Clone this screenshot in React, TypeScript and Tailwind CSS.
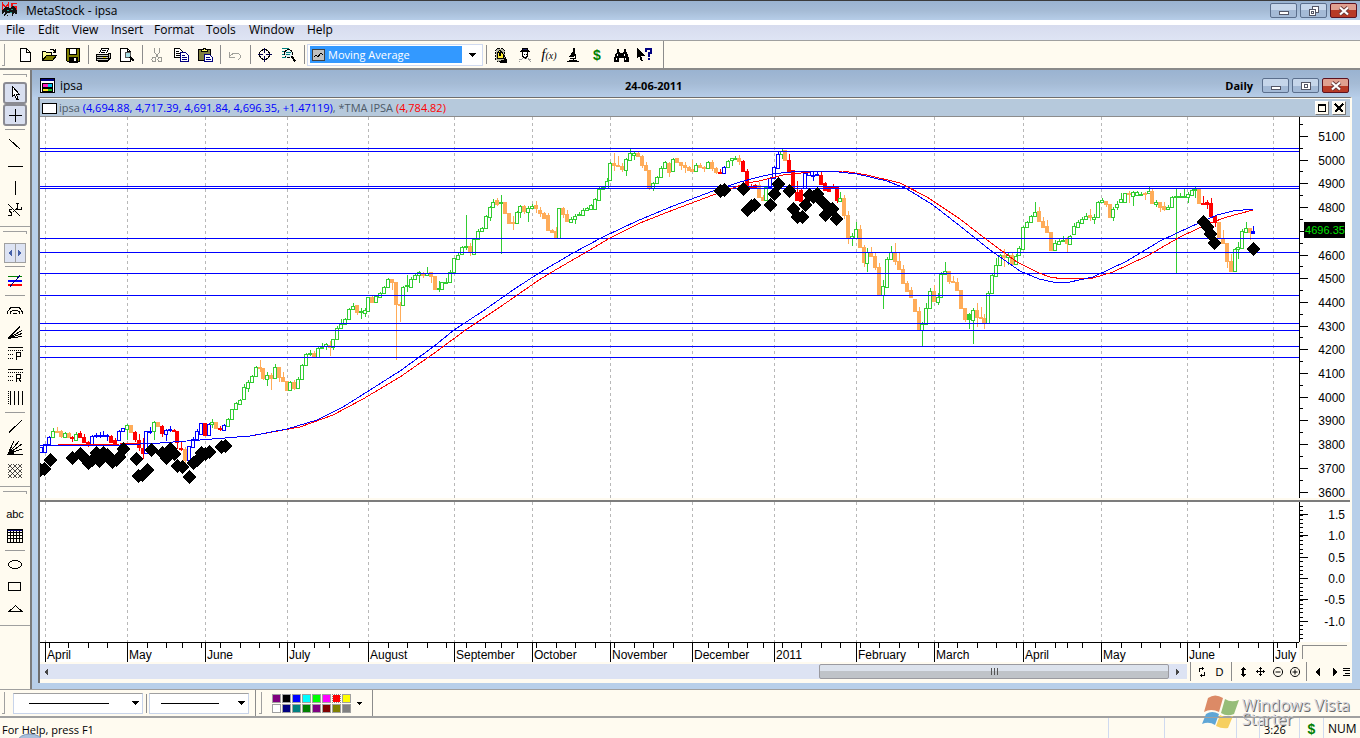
import type { ReactNode } from "react";

type Tone = "g" | "o" | "r" | "b";

const toneColor = { g: "#32cd32", o: "#ffac59", r: "#ff0000", b: "#0000ff" };

// x, tone, high, body top, body bottom, low
const candleData = `
41 b 447 447 452 452|45 b 444 444 452 452|49 b 436 437 444 444|53 g 428 431 437 437|57 o 427 431 432 432|61 o 430 431 436 437|65 g 432 433 437 437|69 o 432 433 437 437
72 r 436 437 438 441|76 g 432 434 440 440|80 r 431 433 437 437|84 r 434 437 442 442|88 r 441 442 443 446|92 b 435 436 444 444|96 b 433 435 436 437|100 b 432 435 436 437
103 b 431 435 436 436|107 b 434 435 436 440|111 r 435 436 442 442|115 r 438 440 443 445|119 b 430 431 440 440|123 b 428 428 431 431|127 g 424 425 429 439|131 o 425 425 432 432
135 r 431 432 439 441|139 r 434 440 447 450|143 r 438 448 453 458|146 b 431 431 453 453|150 b 427 431 432 433|154 g 421 422 431 439|158 o 422 422 426 426|162 r 425 426 433 436
166 b 429 430 434 440|170 b 426 429 430 431|174 r 429 430 431 431|177 r 431 431 442 448|181 r 441 448 449 450|185 o 447 449 460 463|189 b 446 446 460 460|193 b 437 439 447 447
197 b 429 431 439 439|201 b 423 423 434 434|205 r 423 423 435 435|209 b 423 424 435 435|212 g 419 422 424 427|216 o 422 422 428 428|220 r 426 428 429 430|224 b 424 425 430 430
228 g 418 419 426 426|232 g 409 409 419 419|236 g 402 403 409 409|240 g 399 400 404 404|244 g 384 387 399 399|248 g 380 382 388 391|252 g 375 376 382 382|256 g 366 367 376 376
260 o 360 367 368 371|263 o 368 368 378 379|267 g 372 375 379 385|271 o 373 375 378 389|275 g 364 367 378 378|279 o 367 367 377 381|283 o 372 377 381 381|287 o 381 381 390 390
290 g 381 382 390 390|294 o 380 382 388 389|298 g 377 379 388 388|302 g 364 365 379 379|306 g 353 354 365 365|310 g 350 353 354 355|314 o 351 353 356 357|318 g 347 348 357 357
322 g 343 347 348 348|326 g 343 344 346 349|330 o 341 345 347 355|333 g 339 339 347 349|337 g 326 328 339 339|341 g 319 324 328 328|345 g 318 319 324 324|349 g 308 309 319 319
353 g 303 306 309 309|357 o 305 305 312 314|361 g 308 311 312 318|365 g 308 310 313 316|368 g 297 297 311 311|372 o 296 297 302 302|376 g 296 296 302 302|380 g 292 293 297 297
384 g 286 287 293 293|388 g 278 279 287 287|392 o 279 279 282 289|396 o 282 282 304 359|400 o 302 304 305 321|403 g 286 287 305 305|407 g 275 285 286 291|411 g 277 279 287 287
415 g 273 275 279 279|419 g 271 272 275 282|423 o 272 273 275 277|427 g 267 273 275 275|431 o 272 272 276 282|435 o 276 276 289 289|439 g 281 288 289 291|442 g 282 282 289 289
446 g 278 282 283 283|450 g 270 272 282 282|454 g 258 258 272 272|458 g 253 255 259 259|462 g 246 247 254 254|466 g 215 246 247 249|470 o 243 246 252 255|474 g 239 239 254 254
478 g 229 231 239 239|482 g 227 228 231 231|486 g 215 216 228 228|490 g 206 207 217 220|493 g 199 202 207 207|497 o 198 200 204 205|501 g 195 202 203 253|505 o 202 202 213 213
509 o 213 213 223 223|513 o 216 222 223 229|517 g 211 212 223 223|520 g 205 206 212 217|524 o 205 206 211 213|528 g 206 208 212 221|532 g 204 206 208 208|536 o 201 205 208 212
540 o 207 210 213 216|544 o 212 213 218 218|548 o 213 215 230 230|552 o 229 230 232 232|556 o 227 231 237 237|559 g 208 208 238 238|563 o 207 208 214 217|567 o 210 214 221 221
571 g 217 219 222 222|575 g 214 216 219 223|579 g 212 214 215 215|583 g 208 210 215 215|587 g 207 208 210 210|591 g 204 205 209 209|595 g 198 199 209 209|599 g 187 189 200 200
603 g 186 187 189 189|607 g 178 181 188 188|610 g 162 163 180 180|614 o 153 163 165 170|618 o 156 165 166 166|622 o 163 166 169 171|626 g 158 159 170 175|630 g 149 153 160 160
634 g 152 153 155 159|638 o 152 153 156 156|642 o 155 156 165 167|646 o 162 165 170 170|649 o 170 170 187 189|653 g 182 183 188 190|657 g 176 177 183 183|661 g 166 168 177 177
665 g 161 162 168 168|669 o 162 163 172 176|673 g 158 159 171 171|677 o 158 158 162 162|681 o 162 162 165 169|685 o 162 165 167 172|689 o 166 167 170 170|692 o 160 169 171 171
696 g 163 165 171 171|700 o 163 165 167 167|704 o 166 167 168 171|708 g 161 162 168 168|712 o 160 162 168 170|716 o 167 168 172 173|720 r 169 172 173 173|724 b 166 167 173 173
728 g 160 161 167 167|732 g 158 158 160 165|735 g 156 158 159 159|739 o 155 158 161 164|743 r 160 161 171 171|747 r 169 171 186 186|751 r 184 186 188 188|755 r 184 185 187 187
759 o 182 185 197 197|763 o 195 197 200 200|766 g 186 187 200 200|770 b 177 178 187 187|774 b 166 167 178 178|778 b 152 154 168 168|782 g 149 151 154 158|785 o 150 150 160 160
789 r 154 160 171 171|793 r 170 170 190 190|797 r 181 192 200 200|801 r 188 190 201 201|805 b 172 173 188 188|809 b 171 172 175 175|813 b 172 175 176 180|817 b 172 174 175 175
821 r 171 175 184 184|825 r 182 183 190 190|829 r 186 187 191 191|833 r 184 187 188 188|837 r 187 187 200 202|840 g 192 198 201 201|844 o 195 198 215 218|848 o 211 215 237 243
852 g 233 236 238 245|856 g 222 229 238 238|860 o 225 229 247 247|864 o 245 247 262 266|867 g 248 252 263 271|871 o 247 252 256 256|875 o 253 256 267 269|879 o 263 267 294 294
883 g 280 286 295 308|887 g 257 259 287 287|891 g 246 252 259 259|895 o 243 252 261 264|899 o 253 261 269 269|903 o 265 269 283 283|907 o 281 283 291 291|911 o 287 290 297 297
915 o 299 299 311 311|919 o 307 311 329 329|922 g 322 324 330 345|926 g 303 308 324 324|930 g 288 291 308 308|934 o 285 291 301 301|938 g 293 297 302 304|941 g 272 274 297 297
945 g 262 271 274 274|949 o 271 271 281 283|953 o 276 281 282 282|957 o 278 282 290 290|961 o 290 290 308 308|965 o 308 308 319 321|969 g 313 314 319 328|973 g 308 310 320 343
977 o 303 310 317 326|981 o 307 317 318 318|984 o 314 318 322 328|988 g 291 293 323 323|992 g 273 275 293 293|996 g 258 265 276 276|1000 g 254 255 265 265|1004 o 249 255 257 266
1008 g 253 255 257 264|1012 o 253 255 264 264|1016 g 254 256 264 264|1019 g 246 248 255 255|1023 g 226 227 249 249|1027 g 221 222 227 227|1031 g 215 216 222 222|1035 g 202 212 216 216
1039 o 207 211 221 221|1043 o 217 221 227 227|1047 o 220 226 232 232|1051 o 232 232 250 250|1055 g 240 243 250 250|1059 g 239 241 244 244|1063 g 236 240 241 241|1067 o 237 239 243 252
1070 g 235 236 244 244|1074 g 223 226 234 234|1078 g 220 222 227 227|1082 g 217 219 223 223|1086 g 213 216 219 219|1090 o 209 215 217 220|1094 g 214 217 219 223|1098 g 201 202 217 217
1102 g 198 200 202 202|1106 o 201 201 204 206|1110 o 204 204 217 217|1113 g 207 209 217 220|1117 g 201 204 207 209|1121 g 193 199 202 202|1125 g 193 193 202 202|1129 o 191 193 194 202
1133 g 191 192 196 205|1137 g 191 192 195 195|1141 g 192 194 195 195|1145 o 192 193 194 199|1149 g 187 191 193 193|1152 o 188 191 203 203|1156 g 200 202 204 206|1160 o 202 202 207 211
1164 o 202 206 209 210|1168 g 205 207 209 209|1172 g 196 197 207 207|1176 g 189 196 197 273|1180 g 193 196 197 197|1184 g 189 196 197 197|1188 g 192 194 197 202|1192 g 189 190 195 195
1195 g 187 189 190 197|1199 o 189 189 203 203|1203 r 196 203 204 204|1207 r 200 202 204 208|1211 r 198 203 216 216|1215 r 216 216 222 226|1219 o 222 222 238 238|1223 o 230 238 243 243
1227 o 243 243 261 267|1231 o 254 261 271 271|1235 g 248 249 271 271|1238 g 242 247 249 258|1242 g 229 231 248 248|1246 g 222 228 232 232|1250 o 228 228 232 239|1253 b 226 231 233 233`;

const candles = candleData
  .trim()
  .split(/[|\n]/)
  .map((row) => {
    const [x, tone, ...rest] = row.split(" ");
    const [high, top, bottom, low] = rest.map(Number);
    return { x: Number(x), tone: tone as Tone, high, top, bottom, low };
  });

const signals = [
  [40, 470], [44, 469], [50, 460], [72, 458], [80, 454], [84, 458], [88, 463], [92, 460], [96, 453], [99, 461],
  [103, 453], [107, 455], [112, 462], [116, 460], [119, 457], [123, 449], [136, 459], [138, 476], [142, 475],
  [147, 470], [151, 450], [162, 453], [166, 458], [170, 449], [174, 454], [177, 466], [182, 467], [189, 477],
  [193, 463], [197, 460], [201, 453], [205, 454], [209, 452], [221, 447], [225, 446], [720, 191], [724, 190],
  [743, 189], [747, 210], [751, 206], [754, 205], [770, 205], [774, 194], [778, 184], [789, 191], [793, 209],
  [797, 217], [802, 217], [805, 205], [809, 195], [813, 197], [817, 194], [821, 201], [825, 215], [828, 208],
  [832, 209], [836, 219], [1203, 222], [1207, 227], [1210, 234], [1214, 243], [1253, 249],
];

const fastAverage =
  "40,445 120,445 160,443 200,440 250,436 287,429 317,420 343,407 370,390 400,371 433,347 454,330 483,311 513,290 539,273 573,253 603,237 637,221 673,206 713,191 740,182 759,177 772,174 800,171 830,171 857,174 887,181 907,189 933,205 960,226 990,250 1020,271 1039,279 1053,282 1070,282 1093,277 1127,261 1160,241 1190,227 1217,215 1233,211 1253,209";
const slowAverage =
  "40,446 58,445 120,444 160,443 200,440 250,436 300,427 333,415 363,399 400,377 433,354 467,329 500,307 539,280 557,269 583,254 610,238 640,223 673,210 713,195 747,183 759,181 783,175 810,172 843,171 867,175 900,183 927,197 960,219 987,240 1017,262 1039,273 1050,277 1063,279 1093,278 1113,272 1147,256 1180,237 1210,223 1227,217 1253,210";

const levels = [148, 151, 186, 188, 238, 252, 273, 295, 323, 330, 346, 357];

const months = [
  { x: 45, label: "April" },
  { x: 127, label: "May" },
  { x: 205, label: "June" },
  { x: 287, label: "July" },
  { x: 368, label: "August" },
  { x: 454, label: "September" },
  { x: 532, label: "October" },
  { x: 610, label: "November" },
  { x: 692, label: "December" },
  { x: 774, label: "2011" },
  { x: 856, label: "February" },
  { x: 934, label: "March" },
  { x: 1023, label: "April" },
  { x: 1101, label: "May" },
  { x: 1187, label: "June" },
  { x: 1273, label: "July" },
];

const weekTicks = [
  49, 68, 88, 107, 147, 166, 182, 201, 220, 240, 259, 279, 294, 314, 329, 349, 388, 407, 427, 446, 466, 485, 501,
  517, 536, 556, 575, 595, 614, 634, 653, 673, 708, 728, 747, 763, 782, 801, 821, 840, 860, 879, 899, 918, 938, 957,
  977, 996, 1016, 1035, 1055, 1067, 1082, 1121, 1141, 1160, 1180, 1199, 1219, 1238, 1258, 1277, 1296,
];

const prices = [5100, 5000, 4900, 4800, 4700, 4600, 4500, 4400, 4300, 4200, 4100, 4000, 3900, 3800, 3700, 3600];
const lowerScale = ["1.5", "1.0", "0.5", "0.0", "-0.5", "-1.0"];

const palette = [
  ["#800080", "#000000", "#0000ff", "#00ffff", "#00ff00", "#ff00ff", "#ff0000", "#ffff00"],
  ["#ffffff", "#000080", "#008080", "#008000", "#800080", "#800000", "#808000", "#808080"],
];

function Icon({ children, size = 16, stroke = "#000" }: { children: ReactNode; size?: number; stroke?: string }) {
  return (
    <svg
      width={size}
      height={size}
      viewBox={`0 0 ${size} ${size}`}
      fill="none"
      stroke={stroke}
      shapeRendering="crispEdges"
      className="shrink-0"
      aria-hidden="true"
    >
      {children}
    </svg>
  );
}

function ToolButton({ label, children }: { label: string; children: ReactNode }) {
  return (
    <button aria-label={label} className="flex h-6 w-6 shrink-0 items-center justify-center">
      {children}
    </button>
  );
}

function Separator() {
  return (
    <div className="flex w-[6px] shrink-0 justify-center">
      <div className="h-[19px] w-px bg-[#8c8c8c]" />
    </div>
  );
}

function Grip() {
  return <div className="h-[22px] w-[3px] shrink-0 border-r border-b border-[#a0a0a0]" />;
}

function SideButton({ label, active, children }: { label: string; active?: boolean; children: ReactNode }) {
  return (
    <button
      aria-label={label}
      className={
        active
          ? "flex h-[22px] w-6 items-center justify-center rounded-[3px] border-2 border-[#8b8b93] bg-[#d9dff0]"
          : "flex h-[22px] w-6 items-center justify-center"
      }
    >
      {children}
    </button>
  );
}

function SideRule() {
  return <div className="my-[3px] h-px w-5 bg-[#9a9a9a]" />;
}

function SideGrip() {
  return <div className="mt-1 mb-[5px] h-[3px] w-6 border-t border-r border-[#a0a0a0]" />;
}

function WindowButton({ label, close, children }: { label: string; close?: boolean; children: ReactNode }) {
  return (
    <button
      aria-label={label}
      className={
        close
          ? "flex h-[15px] w-[27px] items-center justify-center rounded-[2px] border border-[#5c1220] bg-linear-to-b from-[#e0a090] from-50% to-[#b83a26] to-50%"
          : "flex h-[15px] w-[27px] items-center justify-center rounded-[2px] border border-[#5b6f8d] bg-linear-to-b from-[#c6d6ea] from-50% to-[#a4bad6] to-50%"
      }
    >
      {children}
    </button>
  );
}

function MinimizeGlyph() {
  return (
    <Icon size={12} stroke="#535666">
      <rect x="1.5" y="6.5" width="9" height="3" fill="#fff" />
    </Icon>
  );
}

function CloseGlyph() {
  return (
    <svg width="12" height="12" viewBox="0 0 12 12" aria-hidden="true">
      <path d="M2 2.5L10 9.5M10 2.5L2 9.5" stroke="#6b3a3a" strokeWidth="4" />
      <path d="M2 2.5L10 9.5M10 2.5L2 9.5" stroke="#fff" strokeWidth="2.2" />
    </svg>
  );
}

function TitleBar() {
  return (
    <header className="flex h-5 items-center border-t border-[#3b3b3b] bg-linear-to-b from-[#9ab3d1] via-[#a5bbd5] to-[#b6cde8] pr-[3px]">
      <Icon size={20}>
        <path d="M2.5 9V2.500l3 4l3-4V8M17 2.500h-5v3h4v4h-5" stroke="#f01010" strokeWidth="1.500" />
        <path d="M2 9l3-3h3l2 1l3-2l3 2l1 4l-1 4l-1-4l-2 2v2h-1v-3h-3l-2 3H8l1-3H7l-2 3H4l1-4l-3 2z" fill="#111" stroke="none" />
        <path d="M7 9.500h2M11 8.500h2M10 11.500h2" stroke="#1f9a8c" />
      </Icon>
      <h1 className="ml-[6px] flex-1 text-[12px]">MetaStock - ipsa</h1>
      <div className="flex gap-[3px]">
        <WindowButton label="Minimize">
          <MinimizeGlyph />
        </WindowButton>
        <WindowButton label="Restore">
          <Icon size={12} stroke="#535666">
            <rect x="4.5" y="1.5" width="6" height="6" fill="#fff" />
            <rect x="1.5" y="4.5" width="6" height="6" fill="#fff" />
            <rect x="3.5" y="6.5" width="2" height="2" />
          </Icon>
        </WindowButton>
        <WindowButton label="Close" close>
          <CloseGlyph />
        </WindowButton>
      </div>
    </header>
  );
}

function MenuBar() {
  return (
    <nav className="flex h-[21px] items-center border-b border-[#a0a0a0] bg-linear-to-b from-[#ffffff] from-25% via-[#d7dcee] via-25% to-[#dee4f4] pl-[6px]">
      <button className="w-8 text-left">File</button>
      <button className="w-[34px] text-left">Edit</button>
      <button className="w-[39px] text-left">View</button>
      <button className="w-[43px] text-left">Insert</button>
      <button className="w-[52px] text-left">Format</button>
      <button className="w-[43px] text-left">Tools</button>
      <button className="w-[58px] text-left">Window</button>
      <button className="text-left">Help</button>
    </nav>
  );
}

function Toolbar() {
  return (
    <div className="flex h-[29px] items-center border-b-2 border-[#8a8a8a]">
      <div className="flex h-full items-center border-r border-[#8c8c8c] pr-[6px] pl-[2px]">
        <Grip />
        <div className="ml-2 flex items-center">
          <ToolButton label="New">
            <Icon>
              <path d="M3.5 1.5h6l4 4v9h-10zM9.5 1.5v4h4" fill="#fff" />
            </Icon>
          </ToolButton>
          <ToolButton label="Open">
            <Icon>
              <path d="M1.5 13.5v-9h3l1 1h5v3M9 2.5h3l2 2M14.5 2v3h-3" fill="#ffff9a" />
              <path d="M1.5 13.5l4-5h10l-4 5z" fill="#808000" />
            </Icon>
          </ToolButton>
          <ToolButton label="Save">
            <Icon>
              <path d="M1.5 1.5h13v13h-12l-1-1z" fill="#808000" />
              <rect x="4.5" y="1.5" width="7" height="6" fill="#fff" />
              <rect x="4" y="10" width="8" height="5" fill="#000" />
              <rect x="9" y="11" width="2" height="3" fill="#fff" stroke="none" />
            </Icon>
          </ToolButton>
          <Separator />
          <ToolButton label="Print">
            <Icon>
              <path d="M4.5 6.5l2-5h7l-2 5" fill="#fff" />
              <path d="M1 7.5h12l2-1v5l-2 2H1z" fill="#c8c8c0" />
              <path d="M7 3.5h4M6 5.5h4M1 9.5h13M1 11.5h12M3 14.5h10M13 6v7" />
              <path d="M8 10.5h3" stroke="#e8d800" />
            </Icon>
          </ToolButton>
          <ToolButton label="Print Preview">
            <Icon>
              <path d="M1.5 1.5h7l3 3v10h-10z" fill="#fff" />
              <path d="M8.5 1.5v3h3" />
              <circle cx="9" cy="8" r="3" fill="#a8dfe6" stroke="#555" />
              <path d="M11 10l4 4" strokeWidth="2" />
            </Icon>
          </ToolButton>
          <Separator />
          <ToolButton label="Cut">
            <Icon stroke="#9a9a94">
              <path d="M5.5 1v4l4 6M10.5 1v4l-4 6" />
              <circle cx="5" cy="12.5" r="2" />
              <circle cx="11" cy="12.5" r="2" />
            </Icon>
          </ToolButton>
          <ToolButton label="Copy">
            <Icon>
              <path d="M1.5 1.5h5l3 3v6h-8zM3 4.5h3M3 6.5h5M3 8.5h5" fill="#fff" />
              <path d="M7.5 5.5h5l3 3v6h-8zM9 8.5h3M9 10.5h5M9 12.5h5" fill="#fff" stroke="#000080" />
            </Icon>
          </ToolButton>
          <ToolButton label="Paste">
            <Icon>
              <rect x="1.5" y="2.5" width="12" height="11" fill="#808040" />
              <path d="M4.5 4.5v-2h2v-1h2v1h2v2z" fill="#ffff70" />
              <path d="M7.5 7.5h5l3 3v4h-8zM9 10.5h4M9 12.5h5" fill="#fff" stroke="#000080" />
            </Icon>
          </ToolButton>
          <Separator />
          <ToolButton label="Undo">
            <Icon stroke="#a0a09a">
              <path d="M2.5 5v5h5M3 9l4-3h4l2 2v3l-2 2" />
            </Icon>
          </ToolButton>
          <Separator />
          <ToolButton label="Crosshair">
            <Icon>
              <circle cx="7.5" cy="7.5" r="5" />
              <path d="M7.5 1v5M7.5 9v6M1 7.5h5M9 7.5h6" stroke="#000050" />
            </Icon>
          </ToolButton>
          <ToolButton label="Zoom">
            <Icon>
              <path d="M1 1.5h7M1 4.5h2M1 7.5h2M1 10.5h4" stroke="#008080" />
              <circle cx="7.500" cy="6.5" r="4" fill="#e4f2f2" />
              <path d="M5 5.500h5M5 7.500h4" stroke="#008080" />
              <path d="M10.500 9.500l4 5" strokeWidth="2" />
            </Icon>
          </ToolButton>
          <Separator />
          <div className="flex h-[22px] w-[176px] items-center border border-[#d0daf0] bg-white pl-[2px]">
            <div className="flex h-[17px] flex-1 items-center bg-[#3399ff] pl-[2px]">
              <Icon size={14}>
                <rect x="0.5" y="1.5" width="12" height="11" fill="#c0c0c0" stroke="#404040" />
                <path d="M2 9l2-2l2 2l3-4l2 2" />
              </Icon>
              <select
                aria-label="Indicator"
                className="ml-[2px] h-[17px] w-full appearance-none bg-transparent text-[11px] leading-[16px] text-white"
              >
                <option>Moving Average</option>
              </select>
            </div>
            <div className="flex w-5 justify-center">
              <DownArrow />
            </div>
          </div>
          <Separator />
          <ToolButton label="Expert Advisor">
            <Icon>
              <path d="M4.5 1.500h5l2 2v9l-2 2h-5l-2-2v-9z" fill="#b8b8a8" strokeDasharray="2 1" />
              <path d="M7 3l3 4v4H4V7z" fill="#ffee30" />
              <path d="M6.5 5.5h1v3h-1zM8 13h4v-3l1 2v3H7" fill="#000" />
            </Icon>
          </ToolButton>
          <ToolButton label="Explorer">
            <Icon>
              <path d="M5 3.5l1-2h4l1 2zM3 4.5h10" fill="#202060" />
              <path d="M5.5 5v4l2 2h1l2-2v-4M7 7h1M9 7h1" fill="#fff" />
              <path d="M2 14.5l3-3h6l3 3M2 12.5h3M11 12.5h3" stroke="#999" strokeDasharray="1 1" />
            </Icon>
          </ToolButton>
          <ToolButton label="Indicator Builder">
            <span className="font-['Liberation_Serif',serif] text-[15px] leading-none italic">
              f<span className="text-[10px]">(x)</span>
            </span>
          </ToolButton>
          <ToolButton label="System Tester">
            <Icon>
              <path d="M8 1h2v3l1 5H5l3-5z" fill="#000" stroke="none" />
              <path d="M4 9.5h5M10.500 8v4M5 11.500h6M2 14.5h12M8 12v2" />
              <path d="M4 13h8v1H4z" fill="#000" stroke="none" />
            </Icon>
          </ToolButton>
          <ToolButton label="Downloader">
            <span className="font-['Liberation_Sans',sans-serif] text-[14px] leading-none font-bold text-[#008000]">$</span>
          </ToolButton>
          <ToolButton label="Find">
            <Icon>
              <path d="M4 2h2v3h1v1h3V5h1V2h2v3l1 1l2 5v4h-5v-4H6v4H1v-4l2-5l1-1z" fill="#000" stroke="none" />
              <path d="M4.5 7v2M11.5 7v2M3.500 11v2M12.500 11v2" stroke="#fff" />
            </Icon>
          </ToolButton>
          <ToolButton label="Context Help">
            <Icon>
              <path d="M0 1v10l2-2l2 5h2L4 9h4z" fill="#000" stroke="none" />
              <path d="M9 5V2h5v4h-2.500v4M11.5 11v2" stroke="#000080" strokeWidth="2" />
            </Icon>
          </ToolButton>
        </div>
      </div>
    </div>
  );
}

function DownArrow() {
  return (
    <Icon size={8}>
      <path d="M0 2h8l-4 4z" fill="#000" stroke="none" />
    </Icon>
  );
}

function SideBar() {
  return (
    <aside className="flex w-8 shrink-0 flex-col border-r-2 border-[#7c7c7c]">
      <div className="flex flex-col items-center border-b border-[#a0a0a0] pb-[5px]">
        <SideGrip />
        <SideButton label="Pointer" active>
          <Icon>
            <path d="M5.5 1.500v10l2-2l2 5h1.500l-1.500-5h3z" fill="#fff" />
          </Icon>
        </SideButton>
        <SideButton label="Cross" active>
          <Icon>
            <path d="M8.5 2v13M2 8.5h13" />
          </Icon>
        </SideButton>
        <SideRule />
        <SideButton label="Trendline down">
          <Icon>
            <path d="M2.5 3.5l11 10" />
          </Icon>
        </SideButton>
        <SideButton label="Horizontal line">
          <Icon>
            <path d="M1 8.5h15" />
          </Icon>
        </SideButton>
        <SideButton label="Vertical line">
          <Icon>
            <path d="M8.5 1v14" />
          </Icon>
        </SideButton>
        <SideButton label="Stop and limit">
          <Icon>
            <path d="M1 2l12 12M6 10l4-4M9 1.500h3M10.5 2v5M9 7.5h5V5" />
            <path d="M5 7.5H2.500v2l2 1v3H1" />
          </Icon>
        </SideButton>
      </div>
      <div className="flex flex-col items-center border-b border-[#a0a0a0] pb-[4px]">
        <SideGrip />
        <div className="mt-1 flex h-[20px] w-[22px] gap-px border border-[#a0a0a0] bg-[#a0a0a0]">
          <button aria-label="Previous" className="flex flex-1 items-center justify-center bg-[#dde3f3]">
            <Icon size={6}>
              <path d="M5 0v6l-4-3z" fill="#4460a8" stroke="none" />
            </Icon>
          </button>
          <button aria-label="Next" className="flex flex-1 items-center justify-center bg-[#dde3f3]">
            <Icon size={6}>
              <path d="M1 0v6l4-3z" fill="#4460a8" stroke="none" />
            </Icon>
          </button>
        </div>
        <SideRule />
        <SideButton label="Channel">
          <Icon>
            <path d="M1 3.5h14" stroke="#008000" />
            <path d="M1 8h14" stroke="#0000ff" strokeWidth="2" />
            <path d="M1 12h14" stroke="#ff0000" strokeWidth="2" />
            <path d="M3 13.5L13 2.5" stroke="#000080" />
          </Icon>
        </SideButton>
        <SideRule />
        <SideButton label="Fibonacci arcs">
          <Icon>
            <path d="M0.500 12v-2l3-4l3-1h3l3 1l3 4v2M3.5 12v-2l3-2h3l3 2v2M6.5 12v-1h3v1" />
          </Icon>
        </SideButton>
        <SideButton label="Fibonacci fan">
          <Icon>
            <path d="M1 14.5L13 2.5M1 14.5L15 6.5M1 14.5L15 9.5M1 14.5L15 12.5" />
          </Icon>
        </SideButton>
        <SideButton label="Projection">
          <Icon>
            <path d="M1 1.5h15M9.5 14V6.5h4v4h-4" />
            <path d="M1 4.5h15M1 8.5h6M1 12.5h6" strokeDasharray="1 1" />
          </Icon>
        </SideButton>
        <SideButton label="Retracement">
          <Icon>
            <path d="M1 1.5h15M9.5 14V6.5h4v4h-4M11.5 10.5l3 4" />
            <path d="M1 4.5h15M1 8.5h6M1 12.5h6" strokeDasharray="1 1" />
          </Icon>
        </SideButton>
        <SideButton label="Time zones">
          <Icon>
            <path d="M3.5 1v14M7.5 1v14M11.5 1v14M15.5 1v14" />
            <path d="M1.5 1v14" strokeDasharray="1 1" />
          </Icon>
        </SideButton>
        <SideRule />
        <SideButton label="Trendline up">
          <Icon>
            <path d="M2 13.5L15 1" />
          </Icon>
        </SideButton>
        <SideButton label="Gann fan">
          <Icon>
            <path d="M0 13.5h16M1 13L7 0M1 13L12 0M1 13L15 3M1 13L15 8" />
            <path d="M1 13l3-4l3 4z" fill="#000" />
          </Icon>
        </SideButton>
        <SideButton label="Gann grid">
          <Icon>
            <path
              d="M1 5l4-4M1 10l9-9M1 15L15 1M6 15l9-9M11 15l4-4M11 1l4 4M6 1l9 9M1 1l14 14M1 6l9 9M1 11l4 4"
              strokeWidth="0.700"
            />
          </Icon>
        </SideButton>
      </div>
      <div className="flex flex-col items-center border-b border-[#a0a0a0] pb-[5px]">
        <SideGrip />
        <div className="h-1" />
        <SideButton label="Text">
          <span className="font-['Liberation_Sans',Arial,sans-serif] text-[11px]">abc</span>
        </SideButton>
        <SideButton label="Grid">
          <Icon>
            <path d="M0.500 1.5h15v13h-15zM0 4.5h16M0 7.5h16M0 10.5h16M3.5 1v14M6.5 1v14M9.5 1v14M12.5 1v14" />
            <path d="M1 2.5h14" stroke="#000080" />
          </Icon>
        </SideButton>
        <SideRule />
        <SideButton label="Ellipse">
          <Icon>
            <ellipse cx="8" cy="7.500" rx="6.5" ry="4" />
          </Icon>
        </SideButton>
        <SideButton label="Rectangle">
          <Icon>
            <rect x="1.5" y="3.5" width="12" height="8" />
          </Icon>
        </SideButton>
        <SideButton label="Triangle">
          <Icon>
            <path d="M2 10.5h13l-6.5-6z" />
          </Icon>
        </SideButton>
      </div>
    </aside>
  );
}

function MonthLines() {
  return (
    <g stroke="#b8b8b8" strokeDasharray="3 3">
      {months.map((m) => (
        <line key={m.x} x1={m.x + 0.5} x2={m.x + 0.5} y1="0" y2="100%" />
      ))}
    </g>
  );
}

function Candle({ x, tone, high, top, bottom, low }: (typeof candles)[number]) {
  const color = toneColor[tone];
  const hollow = (tone === "g" || tone === "b") && bottom - top > 1 && !(x === 969 || x === 1253);
  return (
    <g fill={color} stroke="none">
      <rect x={x} y={high} width="1" height={top - high} />
      <rect x={x} y={bottom} width="1" height={low - bottom + 1} />
      {hollow ? (
        <rect x={x - 1.5} y={top + 0.5} width="3" height={bottom - top} fill="#fff" stroke={color} />
      ) : (
        <rect x={x - 2} y={top} width="4" height={bottom - top + 1} />
      )}
    </g>
  );
}

function PricePlot() {
  return (
    <svg className="h-[381px] min-w-0 flex-1" shapeRendering="crispEdges" role="img" aria-label="ipsa price chart">
      <g transform="translate(-40 0)">
        <MonthLines />
      </g>
      <g transform="translate(-40 -117)">
        {candles.map((c) => (
          <Candle key={c.x} {...c} />
        ))}
      </g>
      <g transform="translate(0 -117)" stroke="#0000ff">
        {levels.map((y) => (
          <line key={y} x1="0" x2="100%" y1={y + 0.5} y2={y + 0.5} />
        ))}
      </g>
      <g transform="translate(-40 -117)" fill="none">
        <polyline points={slowAverage} stroke="#ff0000" />
        <polyline points={fastAverage} stroke="#0000ff" />
        {signals.map(([x, y]) => (
          <path key={`${x}-${y}`} d={`M${x + 0.5} ${y - 6}l6 6l-6 6l-6 -6z`} fill="#000" stroke="#000" />
        ))}
      </g>
    </svg>
  );
}

function PriceAxis() {
  const y = (i: number) => Math.round(19 + i * 23.7);
  return (
    <svg
      className="h-[381px] w-[51px] shrink-0 overflow-visible font-['Liberation_Sans',Arial,sans-serif] text-[12px]"
      shapeRendering="crispEdges"
      aria-label="Price scale"
    >
      <path d="M0.500 0v381" stroke="#000" />
      {prices.map((p, i) => (
        <g key={p}>
          <path d={`M0 ${y(i) + 0.5}h9M0 ${y(i) - 11.5}h4`} stroke="#000" />
          {p !== 4700 && (
            <text x="46" y={y(i) + 5} textAnchor="end">
              {p}
            </text>
          )}
        </g>
      ))}
      <rect x="5" y="105" width="41" height="16" fill="#000" />
      <text x="26" y="117" textAnchor="middle" fill="#00e000" className="text-[11px]">
        4696.35
      </text>
    </svg>
  );
}

function LowerAxis() {
  const minor = Array.from({ length: 32 }, (_, i) => Math.round(4 + i * 4.25));
  return (
    <svg
      className="w-[51px] shrink-0 font-['Liberation_Sans',Arial,sans-serif] text-[12px]"
      shapeRendering="crispEdges"
      aria-label="Indicator scale"
    >
      <rect x="0" y="0" width="1" height="100%" />
      {minor.map((y) => (
        <path key={y} d={`M0 ${y + 0.5}h4`} stroke="#000" />
      ))}
      {lowerScale.map((label, i) => (
        <g key={label}>
          <path d={`M0 ${Math.round(12 + i * 21.3) + 0.5}h9`} stroke="#000" />
          <text x="46" y={Math.round(17 + i * 21.3)} textAnchor="end">
            {label}
          </text>
        </g>
      ))}
    </svg>
  );
}

function TimeAxis() {
  return (
    <div className="flex h-[21px]">
      <svg
        className="h-[20px] min-w-0 flex-1 border-t border-black bg-white font-['Liberation_Sans',Arial,sans-serif] text-[12px]"
        shapeRendering="crispEdges"
        aria-label="Time scale"
      >
        <g transform="translate(-40 0)">
          {weekTicks.map((x) => (
            <rect key={x} x={x} y="0" width="1" height="5" />
          ))}
          {months.map((m) => (
            <g key={m.x}>
              <rect x={m.x} y="0" width="1" height="19" />
              <text x={m.x + 2} y="16">
                {m.label}
              </text>
            </g>
          ))}
        </g>
      </svg>
      <div className="w-[51px] pt-[3px] pl-[3px]">
        <div className="h-[14px] w-[45px] border-t border-l border-[#8c8c8c]" />
      </div>
    </div>
  );
}

function ScrollRow() {
  return (
    <div className="mt-px flex h-[19px] items-start">
      <div className="flex h-[15px] min-w-0 flex-1 items-center bg-[#dde3f3]">
        <button aria-label="Scroll left" className="flex w-3 justify-center">
          <Icon size={8}>
            <path d="M6 1v6l-4-3z" fill="#444" stroke="none" />
          </Icon>
        </button>
        <div className="flex-1" />
        <div className="flex h-[15px] w-[350px] items-center justify-center gap-[2px] rounded-[2px] border border-[#9a9aa0] bg-linear-to-b from-[#dce2ec] from-50% to-[#bfc3c8] to-50%">
          <i className="h-[7px] w-px bg-[#555]" />
          <i className="h-[7px] w-px bg-[#555]" />
          <i className="h-[7px] w-px bg-[#555]" />
        </div>
        <button aria-label="Scroll right" className="flex w-[18px] justify-center">
          <Icon size={8}>
            <path d="M2 1v6l4-3z" fill="#444" stroke="none" />
          </Icon>
        </button>
      </div>
      <div className="flex h-[15px] w-[163px] shrink-0 items-center">
        <Separator />
        <button aria-label="Refresh" className="flex w-[18px] justify-center">
          <Icon size={12}>
            <path d="M3.500 6V2.500H8M6.500 1v3M8.500 6v3.500H4M5.500 8v3" />
          </Icon>
        </button>
        <button className="w-[17px] text-center font-['Liberation_Sans',Arial,sans-serif] text-[11px]">D</button>
        <Separator />
        <button aria-label="Fit vertically" className="flex w-[18px] justify-center">
          <Icon size={12}>
            <path d="M6 1l3 3H7v4h2l-3 3l-3-3h2V4H3z" fill="#000" stroke="none" />
          </Icon>
        </button>
        <button aria-label="Move" className="flex w-[17px] justify-center">
          <Icon size={12}>
            <path d="M5.500 1v9M1 5.500h9M4 2.5h3M4 8.5h3M2.5 4v3M8.5 4v3" />
          </Icon>
        </button>
        <button aria-label="Zoom out" className="flex w-[17px] justify-center">
          <svg width="12" height="12" fill="none" stroke="#000" aria-hidden="true">
            <path d="M3.5 6h5M6 1.500a4.500 4.500 0 1 0 .1 0z" />
          </svg>
        </button>
        <button aria-label="Zoom in" className="flex w-[17px] justify-center">
          <svg width="12" height="12" fill="none" stroke="#000" aria-hidden="true">
            <path d="M3.5 6h5M6 3.5v5M6 1.500a4.500 4.500 0 1 0 .1 0z" />
          </svg>
        </button>
        <Separator />
        <button aria-label="Previous" className="flex w-[17px] justify-center">
          <Icon size={10}>
            <path d="M7 1v8L2 5z" fill="#000" stroke="none" />
          </Icon>
        </button>
        <button aria-label="Next" className="flex w-[17px] justify-center">
          <Icon size={10}>
            <path d="M3 1v8l5-4z" fill="#000" stroke="none" />
          </Icon>
        </button>
        <div className="flex flex-1 justify-end overflow-hidden">
          <Icon size={8}>
            <path d="M8 0.500H0.500v7H8M0 2.5h8M3 5h5" />
          </Icon>
        </div>
      </div>
    </div>
  );
}

function ChartWindow() {
  return (
    <main className="flex min-w-0 flex-1 flex-col bg-[#b8cfe9] pr-2 pb-[6px] pl-[6px]">
      <div className="-mr-2 -ml-[6px] flex h-[27px] items-center bg-linear-to-b from-[#9ab3d1] via-[#a5bbd5] to-[#b6cde8] pt-1 pr-[11px] pl-2">
        <Icon size={15}>
          <rect x="0.500" y="0.500" width="14" height="14" fill="#fff" />
          <path d="M1 2h13" stroke="#000080" strokeWidth="2" />
          <path d="M2.500 7h5" stroke="#ff20c0" strokeWidth="3" />
          <path d="M7.500 7h5" stroke="#00c8f0" strokeWidth="3" />
          <path d="M2.500 11.500h5" stroke="#ffe020" strokeWidth="2" />
          <path d="M7.500 11.500h5" stroke="#20c020" strokeWidth="2" />
          <path d="M2.500 5h10v4h-10zM2.500 10.500h10v2.500h-10z" />
        </Icon>
        <span className="ml-[5px] w-[565px] text-[12px]">ipsa</span>
        <span className="flex-1 text-[11px] font-bold">24-06-2011</span>
        <span className="mr-[9px] text-[11px] font-bold">Daily</span>
        <div className="flex gap-[3px]">
          <WindowButton label="Minimize chart">
            <MinimizeGlyph />
          </WindowButton>
          <WindowButton label="Maximize chart">
            <Icon size={12} stroke="#535666">
              <rect x="1.5" y="2.5" width="9" height="7" fill="#fff" />
              <rect x="4.5" y="4.5" width="3" height="3" />
            </Icon>
          </WindowButton>
          <WindowButton label="Close chart" close>
            <CloseGlyph />
          </WindowButton>
        </div>
      </div>

      <div className="flex flex-1 flex-col border-t border-r-2 border-l-2 border-[#6e6e6e] border-r-[#fffbf0] bg-[#fffbf0]">
        <div className="mt-px flex h-[18px] items-center border-b border-[#8c8c8c] bg-[#b6c9dc] pr-[4px] pl-[1px] text-[11px] leading-[16px]">
          <Icon size={18}>
            <rect x="1.5" y="4.5" width="14" height="10" fill="#fff" />
          </Icon>
          <p className="flex-1 whitespace-nowrap text-[#4d5a68]">
            ipsa <span className="text-[#0000ff]">(4,694.88, 4,717.39, 4,691.84, 4,696.35, +1.47119)</span>, *TMA IPSA{" "}
            <span className="text-[#ff0000]">(4,784.82)</span>
          </p>
          <div className="flex gap-[3px]">
            <button aria-label="Maximize pane" className="h-[14px] w-[14px] border border-[#777] border-t-white border-l-white bg-[#fffbf0]">
              <Icon size={12}>
                <path d="M2.5 2.5h7v7h-7zM2 3.5h8" />
              </Icon>
            </button>
            <button aria-label="Close pane" className="h-[14px] w-[14px] border border-[#777] border-t-white border-l-white bg-[#fffbf0]">
              <Icon size={12}>
                <path d="M2 2l8 8M10 2l-8 8" strokeWidth="1.500" />
              </Icon>
            </button>
          </div>
        </div>
        <section className="flex bg-white">
          <PricePlot />
          <PriceAxis />
        </section>
        <div className="h-[4px] border-b-2 border-[#7c7c7c]" />
        <section className="flex min-h-[140px] flex-1 bg-white">
          <div className="relative min-w-0 flex-1">
            <svg className="absolute inset-0 h-full w-full" shapeRendering="crispEdges" aria-hidden="true">
              <g transform="translate(-40 0)">
                <MonthLines />
              </g>
            </svg>
          </div>
          <div className="relative w-[51px]">
            <div className="absolute inset-0 flex">
              <LowerAxis />
            </div>
          </div>
        </section>
        <TimeAxis />
        <ScrollRow />
      </div>
    </main>
  );
}

function DrawingBar() {
  return (
    <div className="flex h-7 items-center border-t border-b border-[#a0a0a0]">
      <div className="flex h-full w-[256px] items-center border-r border-[#8c8c8c] pl-[2px]">
        <Grip />
        <div className="relative ml-2 h-[21px] w-[130px]">
          <select aria-label="Line style" className="h-full w-full appearance-none border border-[#c8d4ea] border-t-[#a0a0a0] bg-white" />
          <div className="pointer-events-none absolute inset-0 flex items-center justify-between pr-1 pl-4">
            <i className="h-px w-20 bg-black" />
            <DownArrow />
          </div>
        </div>
        <Separator />
        <div className="relative h-[21px] w-[100px]">
          <select aria-label="Line weight" className="h-full w-full appearance-none border border-[#c8d4ea] border-t-[#a0a0a0] bg-white" />
          <div className="pointer-events-none absolute inset-0 flex items-center justify-between pr-1 pl-3">
            <i className="h-px w-[58px] bg-black" />
            <DownArrow />
          </div>
        </div>
      </div>
      <div className="flex h-full w-[117px] items-center border-r border-[#8c8c8c] pl-[3px]">
        <Grip />
        <div className="ml-[10px] flex flex-col gap-px">
          {palette.map((row, r) => (
            <div key={r} className="flex gap-px">
              {row.map((color) => (
                <button
                  key={color}
                  aria-label={color}
                  className={
                    color === "#ff0000"
                      ? "h-[9px] w-[9px] border border-dotted border-[#888] bg-clip-padding"
                      : "h-[9px] w-[9px] border border-[#a0a0a0]"
                  }
                  style={{ backgroundColor: color }}
                />
              ))}
            </div>
          ))}
        </div>
        <div className="ml-[5px]">
          <Icon size={6}>
            <path d="M0 2h6l-3 3z" fill="#000" stroke="none" />
          </Icon>
        </div>
      </div>
    </div>
  );
}

function StatusBar() {
  return (
    <footer className="relative flex h-[21px] items-center overflow-hidden border-t border-[#a0a0a0] text-[11px]">
      <p className="flex-1 pt-1 pl-[2px]">For Help, press F1</p>
      <div className="h-full w-14 border-l border-[#d0daf0]" />
      <div className="h-full w-[72px] border-l border-[#d0daf0]" />
      <div className="h-full w-[23px] border-l border-[#d0daf0]" />
      <div className="h-full w-10 border-l border-[#d0daf0] pt-1 pl-1">3:26</div>
      <div className="h-full w-6 border-l border-[#d0daf0] pt-[3px] text-center font-['Liberation_Sans',sans-serif] text-[14px] font-bold text-[#008000]">
        $
      </div>
      <div className="h-full w-[37px] border-l border-[#d0daf0] pt-[3px] pl-1 text-[12px]">NUM</div>
      <svg className="absolute bottom-0 left-[18px]" width="24" height="5" aria-hidden="true">
        <ellipse cx="12" cy="8" rx="12" ry="7" fill="#a9c0dc" stroke="#8098b8" />
      </svg>
    </footer>
  );
}

function VistaBadge() {
  return (
    <div className="pointer-events-none absolute right-[10px] bottom-[9px] flex items-center text-[#d4d4dc] [text-shadow:1px_1px_0_#666]">
      <svg width="38" height="34" viewBox="0 0 38 34" aria-hidden="true">
        <path d="M6 3q7-5 15 0l-4 14q-8-4-15 0z" fill="#dc8a66" />
        <path d="M23 4q6 4 14 1l-5 14q-7 3-13-1z" fill="#96bd78" />
        <path d="M4 19q6-4 13 0l-4 11q-6-4-13-1z" fill="#5fa6d6" />
        <path d="M18 20q6 4 13 1l-5 12q-6 1-12-2z" fill="#f6cf60" />
      </svg>
      <div className="ml-[2px] font-['Open_Sans',sans-serif] text-[16px] leading-[14px]">
        <div>Windows Vista</div>
        <div>Starter</div>
      </div>
    </div>
  );
}

export default function App() {
  return (
    <div className="relative flex min-h-screen flex-col bg-[#fffbf0] font-['Open_Sans','Noto_Sans',sans-serif] text-[12px] leading-[16px] text-black">
      <TitleBar />
      <MenuBar />
      <Toolbar />
      <div className="flex flex-1">
        <SideBar />
        <ChartWindow />
      </div>
      <DrawingBar />
      <VistaBadge />
      <StatusBar />
    </div>
  );
}
